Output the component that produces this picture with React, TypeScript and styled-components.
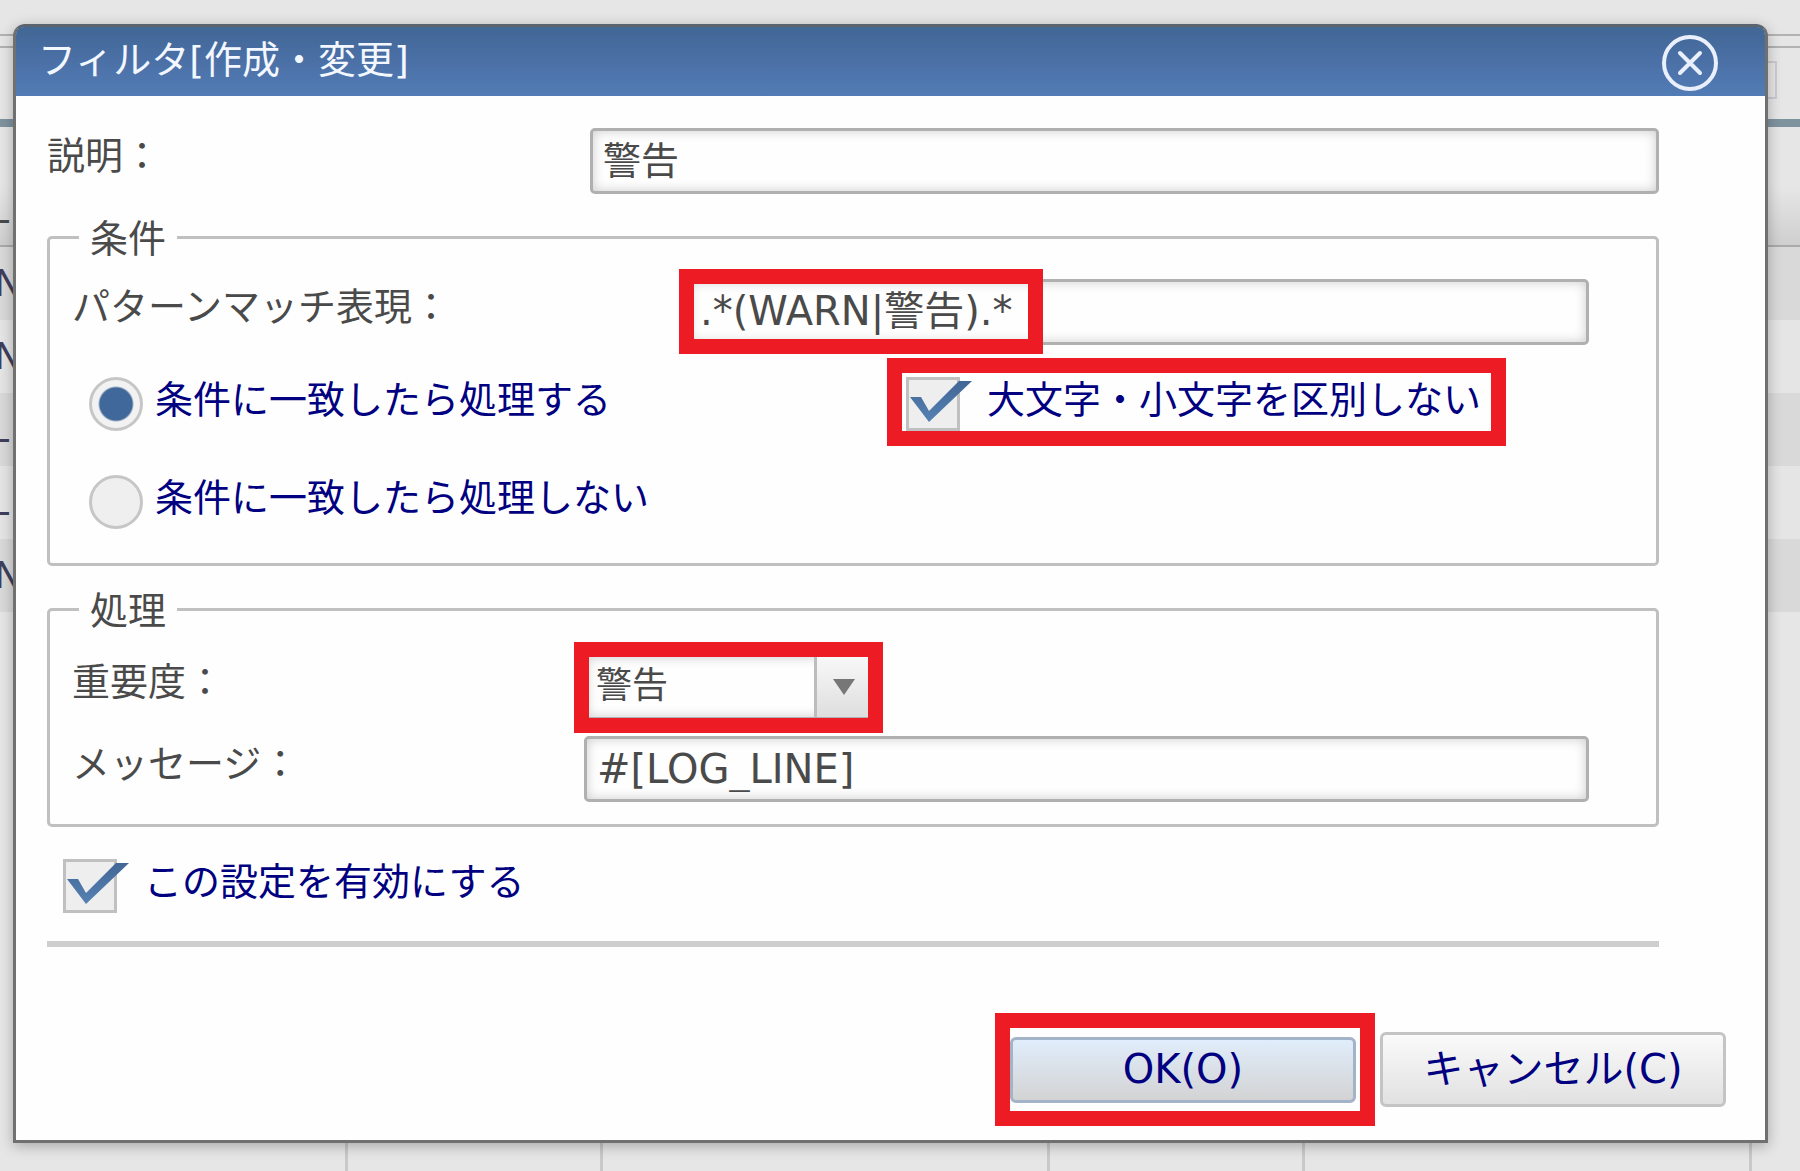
import React from "react";
import styled, { createGlobalStyle, css } from "styled-components";

const RED = "#ed1c24";
const FONT = `"DejaVu Sans", "Noto Sans CJK JP", sans-serif`;

const GlobalStyle = createGlobalStyle`
  *, *::before, *::after { box-sizing: border-box; }
  body { margin: 0; background: #e6e6e6; }
  body, input, select, button {
    font-family: ${FONT};
    font-size: 38px;
    line-height: 46px;
    color: #4a4a4a;
  }
`;

const Screen = styled.div`
  display: grid;
  grid-template: minmax(100vh, auto) / minmax(0, 1fr);
  > * { grid-area: 1 / 1; }
`;

/* Dimmed page behind the dialog */
const Backdrop = styled.div`
  display: flex;
  flex-direction: column;
  overflow: hidden;
`;

const TopStrip = styled.div`
  height: 36px;
  border-bottom: 2px solid #b2b2b2;
`;

const TabStrip = styled.div`
  height: 12px;
  border-bottom: 2px solid #b2b2b2;
`;

const ToolStrip = styled.div`
  display: flex;
  align-items: center;
  justify-content: flex-end;
  height: 79px;
  padding: 0 23px 8px 0;
  border-bottom: 8px solid #7f939f;
`;

const ToolBox = styled.span`
  width: 38px;
  height: 38px;
  border: 2px solid #cdcad2;
`;

const TableHead = styled.div`
  height: 120px;
  padding-top: 60px;
  overflow: hidden;
  background: linear-gradient(#e6e6e6 50%, #cfcfcf);
  border-bottom: 2px solid #aaa;
`;

const TableRow = styled.div<{ $dark: boolean }>`
  flex: none;
  height: 73px;
  padding-top: 13px;
  overflow: hidden;
  color: #3f3f5c;
  background: ${(p) => (p.$dark ? "#d9d9d9" : "#e5e5e5")};
`;

const Clipped = styled.span<{ $shift: number }>`
  display: block;
  text-indent: -${(p) => p.$shift}px;
`;

const TableFoot = styled.div`
  flex: 1;
  display: grid;
  grid-template-columns: 348px 255px 447px 255px 447px 1fr;
  > * { border-right: 3px solid #c9c9c9; }
  > :last-child { border-right: 0; }
`;

/* Dialog */
const Dialog = styled.section`
  align-self: start;
  z-index: 1;
  margin: 24px 32px 28px 13px;
  border: 3px solid #707070;
  border-top-color: #5b646e;
  border-radius: 12px 12px 0 0;
  background: #fefefe;
  box-shadow: 0 3px 14px rgba(0, 0, 0, 0.28);
`;

const TitleBar = styled.header`
  display: flex;
  align-items: center;
  justify-content: space-between;
  height: 69px;
  padding: 0 46px 0 22px;
  border-radius: 8px 8px 0 0;
  background: linear-gradient(#416795, #4a6fa5 45%, #527cb5);
`;

const Title = styled.h1`
  margin: 0;
  font-size: 38px;
  font-weight: 400;
  line-height: 46px;
  padding-bottom: 4px;
  color: #f3f7ff;
`;

const CloseButton = styled.button`
  display: flex;
  padding: 0;
  border: 0;
  background: none;
  svg { width: 58px; height: 58px; }
`;

const Body = styled.div`
  padding: 32px 106px 0 31px;
`;

const Field = styled.div<{ $label: number }>`
  display: grid;
  grid-template-columns: ${(p) => p.$label}px minmax(0, 1fr);
  align-items: start;
`;

const FieldLabel = styled.label`
  line-height: 56px;
  white-space: nowrap;
`;

const Holder = styled.div<{ $width?: number }>`
  position: relative;
  display: flex;
  ${(p) => p.$width && css`width: ${p.$width}px;`}
`;

const boxed = css`
  width: 100%;
  height: 66px;
  margin: 0;
  border: 3px solid #b0b0b0;
  border-radius: 5px;
  background: #fefefe;
  box-shadow: inset 0 0 12px rgba(0, 0, 0, 0.2);
  outline: 0;
`;

/* Kanji sit lower in their line than Latin letters: $kanji lifts them */
const TextInput = styled.input<{ $kanji?: boolean; $size?: number }>`
  ${boxed}
  padding: 0 10px ${(p) => (p.$kanji ? 8 : 0)}px;
  font-size: ${(p) => p.$size ?? 38}px;
`;

const Select = styled.select`
  ${boxed}
  padding: 0 68px 2px 9px;
  font-size: 36px;
  appearance: none;
`;

const SelectArrow = styled.span`
  position: absolute;
  inset: 3px 3px 3px auto;
  width: 57px;
  display: flex;
  align-items: center;
  justify-content: center;
  border-left: 3px solid #bdbdbd;
  background: linear-gradient(#f8f8f8, #dedede);
  pointer-events: none;
  svg { width: 22px; height: 16px; }
`;

/* Red frame laid over the part that the reader should look at */
const Mark = styled.span<{ $inset: string; $width?: number }>`
  position: absolute;
  inset: ${(p) => p.$inset};
  ${(p) => p.$width && css`width: ${p.$width}px;`}
  border: 15px solid ${RED};
  pointer-events: none;
`;

const Group = styled.fieldset<{ $pad: string; $gap: number }>`
  display: block;
  min-width: 0;
  margin: 18px 0 0;
  padding: ${(p) => p.$pad};
  border: 3px solid #c0c0c0;
  border-radius: 5px;
  > div + div { margin-top: ${(p) => p.$gap}px; }
`;

const Legend = styled.legend`
  margin-left: 7px;
  padding: 4px 11px 0;
  line-height: 46px;
`;

const Options = styled.div`
  display: grid;
  grid-template-columns: 817px auto;
  justify-content: start;
  row-gap: 44px;
  padding-left: 17px;
`;

const Choice = styled.label<{ $gap: number }>`
  position: relative;
  justify-self: start;
  display: inline-flex;
  gap: ${(p) => p.$gap}px;
  color: #000080;
  white-space: nowrap;
`;

const Radio = styled.input`
  appearance: none;
  flex: none;
  width: 54px;
  height: 54px;
  margin: 0;
  border: 3px solid #c6c6c6;
  border-radius: 50%;
  background: #efefef;
  &:checked {
    background: radial-gradient(circle, #41689a 0 16px, #f2f2f2 18px);
  }
`;

const TickHolder = styled.span`
  position: relative;
  flex: none;
  width: 54px;
  height: 54px;
  svg {
    position: absolute;
    left: 0;
    top: 0;
    width: 68px;
    height: 54px;
    pointer-events: none;
  }
  input:not(:checked) + svg { display: none; }
`;

const TickInput = styled.input`
  appearance: none;
  display: block;
  width: 54px;
  height: 54px;
  margin: 0;
  border: 3px solid #c0c0c0;
  background: #eee;
`;

const EnableRow = styled.div`
  display: flex;
  padding: 32px 0 28px 16px;
`;

const Divider = styled.hr`
  height: 6px;
  margin: 0;
  border: 0;
  background: #cecece;
`;

const Footer = styled.footer`
  display: flex;
  align-items: center;
  justify-content: flex-end;
  gap: 24px;
  padding: 85px 39px 33px;
`;

const Button = styled.button<{ $primary?: boolean }>`
  width: 346px;
  height: 75px;
  padding: 0 0 2px;
  border: 3px solid #c4c4c4;
  border-radius: 6px;
  font-size: 40px;
  color: #000080;
  background: linear-gradient(#fafafa, #e1e1e1);
  ${(p) =>
    p.$primary &&
    css`
      height: 66px;
      border-color: #a3b3c8;
      background: linear-gradient(#e0edfb, #d3d3d3);
    `}
`;

function Tick({ id }: { id: string }) {
  return (
    <TickHolder>
      <TickInput type="checkbox" id={id} defaultChecked />
      <svg viewBox="0 0 68 54" aria-hidden="true">
        <defs>
          <linearGradient id={`${id}-fill`} x1="0" y1="0" x2="0" y2="1">
            <stop offset="0" stopColor="#416795" />
            <stop offset="1" stopColor="#5681b3" />
          </linearGradient>
        </defs>
        <path d="M4 20H15L23 34L53 4H66L23 45Z" fill={`url(#${id}-fill)`} />
      </svg>
    </TickHolder>
  );
}

const rows = [
  { text: "N", shift: 6 },
  { text: "N", shift: 6 },
  { text: "L", shift: 12 },
  { text: "L", shift: 12 },
  { text: "N", shift: 6 },
];

export default function App() {
  return (
    <>
      <GlobalStyle />
      <Screen>
        <Backdrop aria-hidden="true">
          <TopStrip />
          <TabStrip />
          <ToolStrip>
            <ToolBox />
          </ToolStrip>
          <TableHead>
            <Clipped $shift={12}>L</Clipped>
          </TableHead>
          {rows.map((row, i) => (
            <TableRow key={i} $dark={i % 2 === 0}>
              <Clipped $shift={row.shift}>{row.text}</Clipped>
            </TableRow>
          ))}
          <TableFoot>
            <span />
            <span />
            <span />
            <span />
            <span />
            <span />
          </TableFoot>
        </Backdrop>

        <Dialog role="dialog" aria-labelledby="dialog-title">
          <TitleBar>
            <Title id="dialog-title">フィルタ[作成・変更]</Title>
            <CloseButton type="button" aria-label="閉じる">
              <svg viewBox="0 0 58 58" fill="none" stroke="#e9f0fc" strokeWidth="4">
                <circle cx="29" cy="30" r="26" />
                <path d="M19 20L39 40M39 20L19 40" strokeLinecap="round" />
              </svg>
            </CloseButton>
          </TitleBar>

          <Body>
            <Field $label={543}>
              <FieldLabel htmlFor="description">説明：</FieldLabel>
              <TextInput id="description" defaultValue="警告" $kanji />
            </Field>

            <Group $pad="17px 67px 34px 22px" $gap={32}>
              <Legend>条件</Legend>
              <Field $label={615}>
                <FieldLabel htmlFor="pattern">パターンマッチ表現：</FieldLabel>
                <Holder>
                  <TextInput
                    id="pattern"
                    defaultValue=".*(WARN|警告).*"
                    $kanji
                    $size={40}
                  />
                  <Mark $inset="-10px auto -9px -8px" $width={364} />
                </Holder>
              </Field>
              <Options>
                <Choice $gap={12}>
                  <Radio type="radio" name="match" defaultChecked />
                  条件に一致したら処理する
                </Choice>
                <Choice $gap={27}>
                  <Tick id="ignore-case" />
                  大文字・小文字を区別しない
                  <Mark $inset="-19px -25px -15px -19px" />
                </Choice>
                <Choice $gap={12}>
                  <Radio type="radio" name="match" />
                  条件に一致したら処理しない
                </Choice>
              </Options>
            </Group>

            <Group $pad="20px 67px 22px 22px" $gap={16}>
              <Legend>処理</Legend>
              <Field $label={512}>
                <FieldLabel htmlFor="priority">重要度：</FieldLabel>
                <Holder $width={290}>
                  <Select id="priority" defaultValue="警告">
                    <option>警告</option>
                  </Select>
                  <SelectArrow>
                    <svg viewBox="0 0 22 16" aria-hidden="true">
                      <path d="M0 0H22L11 16Z" fill="#777" />
                    </svg>
                  </SelectArrow>
                  <Mark $inset="-12px -9px -13px -10px" />
                </Holder>
              </Field>
              <Field $label={512}>
                <FieldLabel htmlFor="message">メッセージ：</FieldLabel>
                <TextInput id="message" defaultValue="#[LOG_LINE]" $size={40} />
              </Field>
            </Group>

            <EnableRow>
              <Choice $gap={27}>
                <Tick id="enabled" />
                この設定を有効にする
              </Choice>
            </EnableRow>
            <Divider />
          </Body>

          <Footer>
            <Holder>
              <Button type="button" $primary>
                OK(O)
              </Button>
              <Mark $inset="-24px -19px -23px -15px" />
            </Holder>
            <Button type="button">キャンセル(C)</Button>
          </Footer>
        </Dialog>
      </Screen>
    </>
  );
}
